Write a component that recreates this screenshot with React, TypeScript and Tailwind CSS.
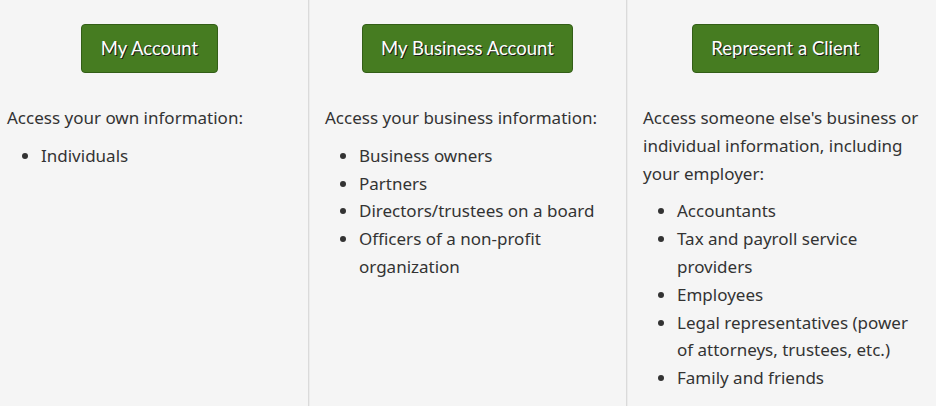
import React from "react";

type Col = { btn: string; intro: string; items: string[] };

const cols: Col[] = [
  { btn: "My Account", intro: "Access your own information:", items: ["Individuals"] },
  {
    btn: "My Business Account",
    intro: "Access your business information:",
    items: ["Business owners", "Partners", "Directors/trustees on a board", "Officers of a non-profit organization"],
  },
  {
    btn: "Represent a Client",
    intro: "Access someone else's business or individual information, including your employer:",
    items: [
      "Accountants",
      "Tax and payroll service providers",
      "Employees",
      "Legal representatives (power of attorneys, trustees, etc.)",
      "Family and friends",
    ],
  },
];

const colClass = [
  "w-[317px] shrink-0 px-4 pt-6",
  "w-[318px] shrink-0 px-4 pt-6 border-l border-[#dadada] shadow-[inset_1px_0_0_#ececec]",
  "w-[318px] shrink-0 px-4 pt-6 border-l border-[#dadada] shadow-[inset_1px_0_0_#ececec]",
];

export default function App() {
  return (
    <div
      className="w-[936px] h-[406px] overflow-hidden bg-[#f5f5f5] text-[#333333]"
      style={{ fontFamily: '"Noto Sans", "Open Sans", sans-serif' }}
    >
      <div className="flex ml-[-9px] h-full">
        {cols.map((c, i) => (
          <div key={c.btn} className={colClass[i]}>
            <div className="flex justify-center">
              <button
                className="h-[49px] px-[18.5px] rounded-[4px] bg-[#467c21] border border-[#335e17] text-white text-[18.5px] leading-none"
                style={{ fontFamily: 'Lato, "Liberation Sans", sans-serif', textShadow: "1px 1px 0px #1a1a1a" }}
              >
                {c.btn}
              </button>
            </div>
            <p className="mt-[31px] mb-[10px] text-[17px] leading-[27.8px]">{c.intro}</p>
            <ul className="list-disc pl-[34px] text-[17px] leading-[27.8px]">
              {c.items.map((it) => (
                <li key={it}>{it}</li>
              ))}
            </ul>
          </div>
        ))}
      </div>
    </div>
  );
}
